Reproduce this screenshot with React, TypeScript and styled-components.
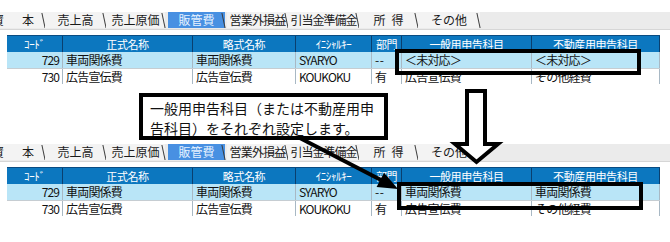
import React from "react";
import styled, { createGlobalStyle } from "styled-components";

const Global = createGlobalStyle`
  html, body { margin: 0; padding: 0; background: #fff; }
  body { width: 670px; height: 242px; overflow: hidden; font-family: "Noto Sans CJK JP", "Noto Sans", sans-serif; }
`;

const Page = styled.div`
  position: relative;
  width: 670px;
  height: 242px;
  box-sizing: border-box;
  padding-top: 12px;
  overflow: hidden;
  background: #fff;
  display: flex;
  flex-direction: column;
`;

const Panel = styled.section`
  height: 72px;
  flex: none;
  overflow: hidden;
  display: flex;
  flex-direction: column;
`;

const TabBar = styled.div`
  height: 18px;
  flex: none;
  background: #ebebeb;
  border-bottom: 1px solid #d6d6d6;
  box-sizing: border-box;
  margin-bottom: 5px;
  overflow: hidden;
`;

const TabStrip = styled.div`
  display: flex;
  height: 100%;
  margin-left: -19px;
`;

const Tab = styled.div<{ $w: number; $active?: boolean; $ls?: number }>`
  position: relative;
  width: ${(p) => p.$w}px;
  flex: none;
  height: 16px;
  display: flex;
  align-items: center;
  justify-content: center;
  font-size: 12px;
  line-height: 16px;
  white-space: nowrap;
  letter-spacing: ${(p) => p.$ls ?? 0}px;
  color: ${(p) => (p.$active ? "#e6f2ff" : "#1a1a1a")};
  background: ${(p) => (p.$active ? "#4890e2" : "#f3f3f3")};
  ${(p) => (p.$active ? "margin: 0 2px 0 3px;" : "")}
  &::after {
    content: "";
    position: absolute;
    right: 1px;
    top: 1px;
    width: 1px;
    height: 15px;
    background: #3a3a3a;
    transform: skewX(12deg);
  }
`;

const COLS = "56px 130px 103px 76px 30px 130px 128px";

const Grid = styled.div`
  margin-left: 7px;
  width: 653px;
  display: flex;
  flex-direction: column;
`;

const HeaderRow = styled.div`
  display: grid;
  grid-template-columns: ${COLS};
  height: 17px;
  background: #0c77bf;
  border-top: 1px solid #0a4c82;
  box-sizing: border-box;
`;

const HeadCell = styled.div`
  color: #ffffff;
  font-size: 11px;
  line-height: 16px;
  text-align: center;
  letter-spacing: -0.4px;
  white-space: nowrap;
  overflow: hidden;
  border-right: 1px solid #0a3f6e;
`;

const Row = styled.div<{ $selected?: boolean }>`
  display: grid;
  grid-template-columns: ${COLS};
  height: 17px;
  box-sizing: border-box;
  background: ${(p) => (p.$selected ? "#b9e5f7" : "#ffffff")};
  border-bottom: 1px solid #c6cdd2;
`;

type Kind = "code" | "latin" | "dash" | "text";

const SPACING: Record<Kind, string> = {
  code: "-0.9px",
  latin: "-0.9px",
  dash: "0.5px",
  text: "-0.8px",
};

const Cell = styled.div<{ $kind: Kind }>`
  font-size: 12px;
  line-height: 16px;
  color: #111;
  padding: 0 3px;
  text-align: ${(p) => (p.$kind === "code" ? "right" : "left")};
  letter-spacing: ${(p) => SPACING[p.$kind]};
  white-space: nowrap;
  overflow: hidden;
  border-right: 1px solid #a8b8c4;
`;

const Middle = styled.div`
  height: 60px;
  flex: none;
  display: flex;
  align-items: flex-start;
`;

const Callout = styled.div`
  position: relative;
  z-index: 2;
  margin: 9px 0 0 139px;
  width: 249px;
  height: 47px;
  box-sizing: border-box;
  border: 4px solid #000;
  background: #fff;
  padding: 1px 0 0 7px;
  font-size: 14px;
  line-height: 20px;
  color: #111;
  white-space: nowrap;
`;

const Highlight = styled.div<{ $x: number; $y: number; $w: number; $h: number }>`
  position: absolute;
  z-index: 1;
  left: ${(p) => p.$x}px;
  top: ${(p) => p.$y}px;
  width: ${(p) => p.$w}px;
  height: ${(p) => p.$h}px;
  box-sizing: border-box;
  border: 4px solid #000;
  pointer-events: none;
`;

const Overlay = styled.svg`
  position: absolute;
  left: 0;
  top: 0;
  z-index: 1;
  pointer-events: none;
`;

type TabDef = { label: string; w: number; active?: boolean; ls?: number };

const TABS: TabDef[] = [
  { label: "資\u2003\u2002本", w: 64 },
  { label: "売上高", w: 61 },
  { label: "売上原価", w: 59 },
  { label: "販管費", w: 57, active: true },
  { label: "営業外損益", w: 61, ls: -0.8 },
  { label: "引当金準備金", w: 71, ls: -1 },
  { label: "所\u2002得", w: 59 },
  { label: "その他", w: 62 },
];

const HEADERS = ["ｺｰﾄﾞ", "正式名称", "略式名称", "ｲﾆｼｬﾙｷｰ", "部門", "一般用申告科目", "不動産用申告科目"];

const KINDS: Kind[] = ["code", "text", "text", "latin", "dash", "text", "text"];

function Table({ first }: { first: [string, string] }) {
  const rows: string[][] = [
    ["729", "車両関係費", "車両関係費", "SYARYO", "--", first[0], first[1]],
    ["730", "広告宣伝費", "広告宣伝費", "KOUKOKU", "有", "広告宣伝費", "その他経費"],
  ];
  return (
    <Panel>
      <TabBar>
        <TabStrip>
          {TABS.map((t) => (
            <Tab key={t.label} $w={t.w} $active={t.active} $ls={t.ls}>
              {t.label}
            </Tab>
          ))}
        </TabStrip>
      </TabBar>
      <Grid>
        <HeaderRow>
          {HEADERS.map((h) => (
            <HeadCell key={h}>{h}</HeadCell>
          ))}
        </HeaderRow>
        {rows.map((r, i) => (
          <Row key={i} $selected={i === 0}>
            {r.map((c, j) => (
              <Cell key={j} $kind={KINDS[j]}>
                {c}
              </Cell>
            ))}
          </Row>
        ))}
      </Grid>
    </Panel>
  );
}

export default function App() {
  return (
    <>
      <Global />
      <Page>
        <Table first={["＜未対応＞", "＜未対応＞"]} />
        <Middle>
          <Callout>
            一般用申告科目（または不動産用申
            <br />
            告科目）をそれぞれ設定します。
          </Callout>
        </Middle>
        <Table first={["車両関係費", "車両関係費"]} />

        <Highlight $x={395} $y={49} $w={246} $h={26} />
        <Highlight $x={397} $y={182} $w={246} $h={28} />

        <Overlay width={670} height={242} viewBox="0 0 670 242">
          <line x1={296} y1={136} x2={381} y2={180} stroke="#000" strokeWidth={4} />
          <polygon points="398,189 376.6,186.9 384,172.7" fill="#000" />
          <polygon
            points="467,91 485,91 485,144 498,144 476.5,162 455,144 467,144"
            fill="#fff"
            stroke="#000"
            strokeWidth={4}
            strokeLinejoin="miter"
          />
        </Overlay>
      </Page>
    </>
  );
}
